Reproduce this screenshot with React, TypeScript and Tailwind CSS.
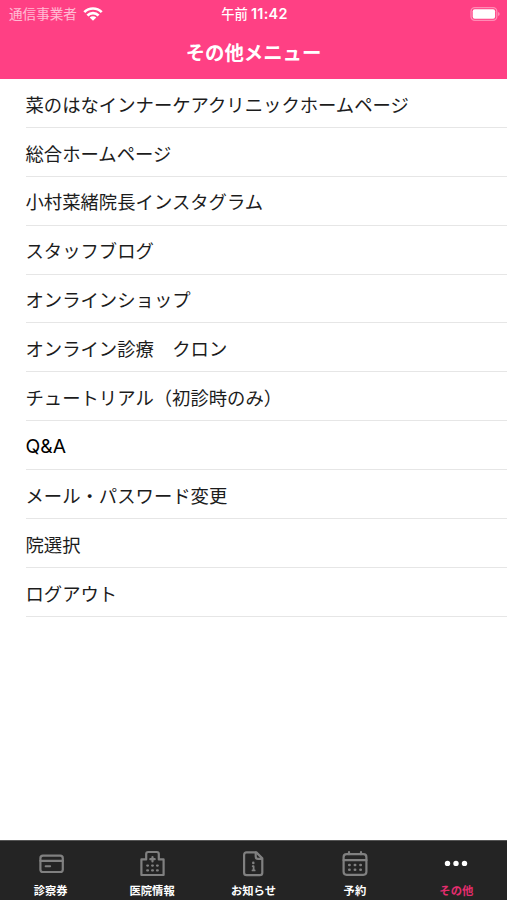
import type { ReactNode } from "react";

const MENU_ITEMS = [
  "菜のはなインナーケアクリニックホームページ",
  "総合ホームページ",
  "小村菜緒院長インスタグラム",
  "スタッフブログ",
  "オンラインショップ",
  "オンライン診療　クロン",
  "チュートリアル（初診時のみ）",
  "Q&A",
  "メール・パスワード変更",
  "院選択",
  "ログアウト",
];

function TabIcon({ children }: { children: ReactNode }) {
  return (
    <svg
      viewBox="0 0 28 28"
      className="h-7 w-7"
      fill="none"
      stroke="currentColor"
      strokeWidth="2.2"
      strokeLinecap="round"
      strokeLinejoin="round"
    >
      {children}
    </svg>
  );
}

function CardIcon() {
  return (
    <TabIcon>
      <rect x="3.4" y="5.6" width="22.4" height="16.4" rx="2.6" />
      <path d="M3.4 10.8h22.4" />
      <path d="M8.6 16.2h4.6" strokeWidth="1.9" />
    </TabIcon>
  );
}

function HospitalIcon() {
  return (
    <TabIcon>
      <path d="M3.4 25V9.4h4.8V4q0-2 2-2h8.6q2 0 2 2v5.4h4.8V25z" />
      <path d="M14.5 7v4.4M12.3 9.2h4.4" />
      <path
        d="M9.2 15.6h.8M14.1 15.6h.8M19 15.6h.8M9.2 20.4h.8M14.1 20.4h.8M19 20.4h.8"
        strokeWidth="2.2"
      />
    </TabIcon>
  );
}

function NoticeIcon() {
  return (
    <TabIcon>
      <path d="M17.3 2.4H7.6q-2.5 0-2.5 2.5v17.8q0 2.5 2.5 2.5h13.2q2.5 0 2.5-2.5V8.4z" />
      <path d="M16.7 2.7v3.8q0 2.4 2.4 2.4H23" />
      <path d="M13.7 16.2h.9v4M13.5 20.4h2.2" strokeWidth="1.8" />
      <circle cx="14.3" cy="12.9" r="1.3" fill="currentColor" stroke="none" />
    </TabIcon>
  );
}

function CalendarIcon() {
  return (
    <TabIcon>
      <rect x="2.6" y="4.2" width="22.8" height="20.6" rx="3" />
      <path d="M2.6 10.2h22.8M8 2.2v2M20 2.2v2" />
      <path
        d="M8.2 15h.4M13.8 15h.4M19.4 15h.4M8.2 19.8h.4M13.8 19.8h.4M19.4 19.8h.4"
        strokeWidth="2.5"
      />
    </TabIcon>
  );
}

function MoreIcon() {
  return (
    <svg viewBox="0 0 28 28" className="h-7 w-7" fill="currentColor">
      <circle cx="5.5" cy="13.4" r="2.7" />
      <circle cx="14" cy="13.4" r="2.7" />
      <circle cx="22.5" cy="13.4" r="2.7" />
    </svg>
  );
}

const TABS = [
  { label: "診察券", icon: <CardIcon /> },
  { label: "医院情報", icon: <HospitalIcon /> },
  { label: "お知らせ", icon: <NoticeIcon /> },
  { label: "予約", icon: <CalendarIcon /> },
  { label: "その他", icon: <MoreIcon />, active: true },
];

function StatusBar() {
  return (
    <div className="grid h-[27px] grid-cols-3 items-center pr-[7px] pl-[9px]">
      <div className="flex items-center gap-[6px]">
        <span className="text-[13.6px] leading-none text-white/65">通信事業者</span>
        <svg viewBox="0 0 20 14" className="h-[14px] w-5" fill="none" stroke="#fff" strokeWidth="2.7">
          <path d="M1.3 5.1a12.3 12.3 0 0 1 17.4 0M4.4 8.5a8 8 0 0 1 11.2 0" />
          <path d="M6.7 10.5a4.7 4.7 0 0 1 6.6 0L10 13.8z" fill="#fff" stroke="none" />
        </svg>
      </div>
      <div className="flex items-center justify-center gap-[3px] pt-px leading-none whitespace-nowrap text-white">
        <span className="text-[13.3px] font-medium">午前</span>
        <span className="font-['Inter',sans-serif] text-[14.4px] font-semibold tracking-[0.3px]">11:42</span>
      </div>
      <svg viewBox="0 0 30 14" className="h-[14px] w-[30px] justify-self-end">
        <rect x="1" y="0.7" width="25.8" height="12.6" rx="3.8" fill="none" stroke="#fff" strokeOpacity="0.4" strokeWidth="1.3" />
        <rect x="2.7" y="2.3" width="22.4" height="9.4" rx="2" fill="#fff" />
        <path d="M28.1 4.9q1.5.6 1.5 2.1t-1.5 2.1z" fill="#fff" fillOpacity="0.45" />
      </svg>
    </div>
  );
}

export default function App() {
  return (
    <div
      lang="ja"
      className="flex h-[900px] w-full flex-col bg-white font-['Noto_Sans_CJK_JP',sans-serif]"
    >
      <header className="h-[79px] shrink-0 bg-[#ff4084]">
        <StatusBar />
        <h1 className="flex h-[50px] items-center justify-center text-[19.4px] leading-none font-bold text-white">
          その他メニュー
        </h1>
      </header>

      <ul className="flex-1">
        {MENU_ITEMS.map((item) => (
          <li
            key={item}
            className="ml-[25.5px] flex h-[48.9px] items-center border-b border-[#e6e6e6] pt-[1.8px] text-[18.35px] leading-none whitespace-nowrap text-[#1c1c1c]"
          >
            {item === "Q&A" ? (
              <span className="pt-px font-['Inter',sans-serif] text-[19.3px] text-black">{item}</span>
            ) : (
              item
            )}
          </li>
        ))}
      </ul>

      <nav className="grid h-[60px] shrink-0 grid-cols-5 border-t border-[#555] bg-[#242424]">
        {TABS.map((tab) => (
          <div key={tab.label} className="flex flex-col items-center pt-[9px]">
            <span className={tab.active ? "text-white" : "text-[#808080]"}>{tab.icon}</span>
            <span
              className={`mt-[7px] text-[11.3px] leading-none font-bold ${
                tab.active ? "text-[#e52d6e]" : "text-white"
              }`}
            >
              {tab.label}
            </span>
          </div>
        ))}
      </nav>
    </div>
  );
}
